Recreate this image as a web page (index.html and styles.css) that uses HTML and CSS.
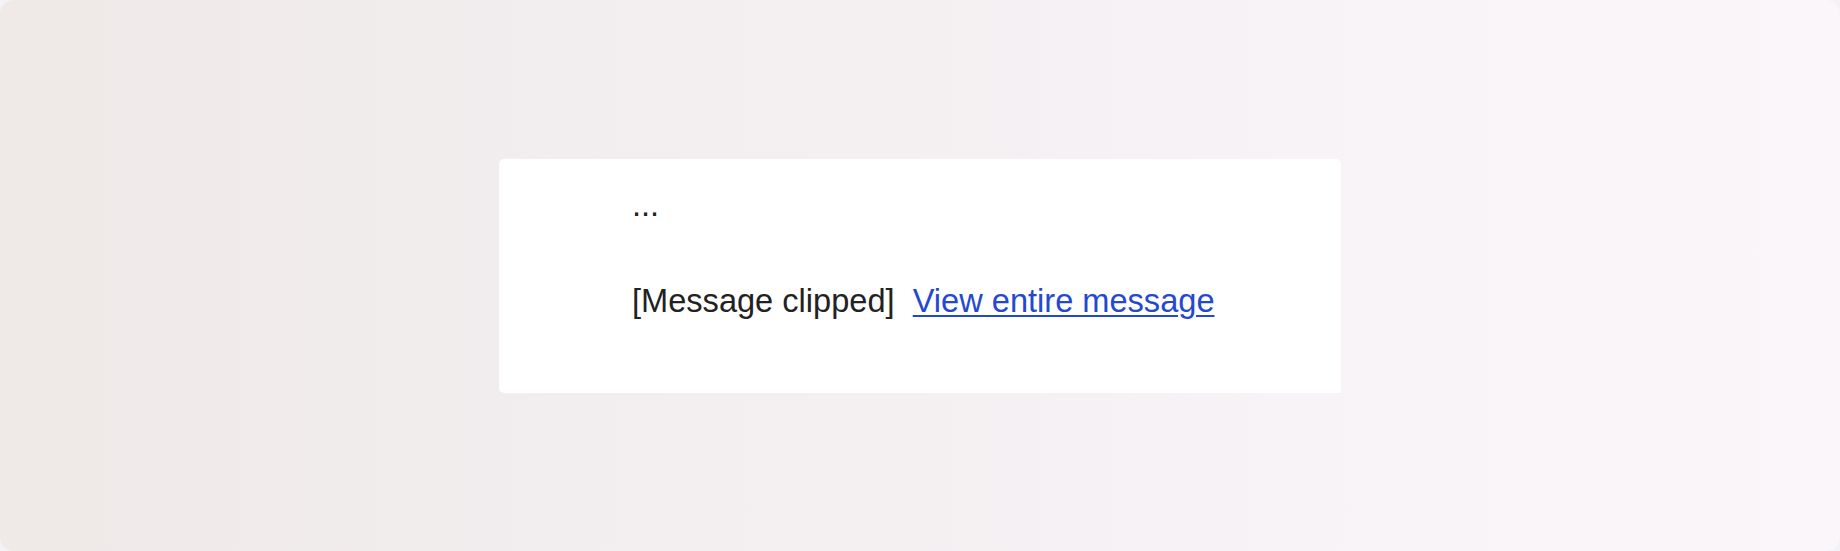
FILE: index.html
```html
<!DOCTYPE html>
<html lang="en">
<head>
<meta charset="utf-8">
<title>Message clipped</title>
<link rel="stylesheet" href="styles.css">
</head>
<body>
  <div class="stage">
    <div class="card">
      <div class="line ellipsis">...</div>
      <div class="line clip-line">[Message clipped]&nbsp; <a class="view-link" href="#">View entire message</a></div>
    </div>
  </div>
</body>
</html>
```

FILE: styles.css
```css
html, body {
  margin: 0;
  padding: 0;
}

body {
  width: 1840px;
  height: 551px;
  background: #f3f2f6;
  font-family: "Liberation Sans", Arial, Helvetica, sans-serif;
}

.stage {
  width: 1840px;
  height: 551px;
  border-radius: 14px;
  background: linear-gradient(90deg, #efeae8 0%, #f3eef0 40%, #f7f3f6 70%, #faf6fa 100%);
  display: flex;
  align-items: center;
  justify-content: center;
  overflow: hidden;
}

.card {
  width: 842px;
  height: 234px;
  box-sizing: border-box;
  background: #ffffff;
  border-radius: 5px 5px 0 5px;
  padding: 27px 0 0 133px;
}

.line {
  font-size: 32.6px;
  line-height: 37px;
  color: #222222;
  white-space: nowrap;
}

.clip-line {
  margin-top: 59px;
}

.view-link {
  color: #2448d2;
  text-decoration: underline;
  text-decoration-thickness: 2px;
  text-underline-offset: 3px;
}
```
